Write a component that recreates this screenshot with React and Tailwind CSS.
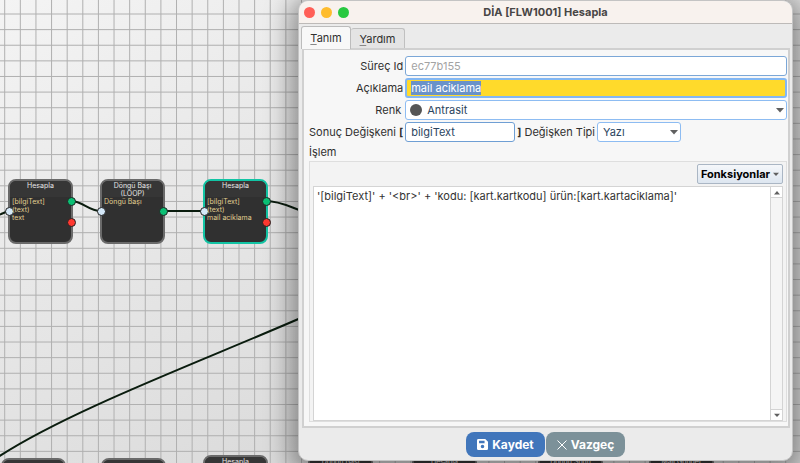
import { useState } from "react";

const GRID = 15.62;
const GRID_LINES = Array.from({ length: 160 }, (_, i) => i);

const nodes = [
  { id: "n1", title: "Hesapla", lines: ["[bilgiText]", "(text)", "text"], place: "left-[8px] top-[179px]", outs: 2, input: true },
  { id: "n2", title: "Döngü Başı (LOOP)", lines: ["Döngü Başı"], place: "left-[100px] top-[179px]", outs: 0, input: true, loop: true },
  { id: "n3", title: "Hesapla", lines: ["[bilgiText]", "(text)", "mail aciklama"], place: "left-[203px] top-[179px]", outs: 2, input: true, selected: true },
  { id: "n4", title: "", lines: [], place: "left-[1px] top-[458px]" },
  { id: "n5", title: "", lines: [], place: "left-[101px] top-[458px]" },
  { id: "n6", title: "Hesapla", lines: [], place: "left-[203px] top-[455px]" },
  { id: "n7", title: "Döngü Başı", lines: [], place: "left-[308px] top-[455px]" },
  { id: "n8", title: "Hesapla", lines: [], place: "left-[412px] top-[455px]" },
  { id: "n9", title: "Döngü Sonu", lines: [], place: "left-[538px] top-[455px]" },
  { id: "n10", title: "Mail Gönder", lines: [], place: "left-[649px] top-[455px]" },
];

const wires = [
  "M-4 216C2 214 5 212 9 211",
  "M71 201C83 201 88 211 101 211",
  "M164 211H204",
  "M266 201C280 201 290 207 302 211",
  "M-2 457C70 410 200 362 310 314",
];

function Port({ className }) {
  return (
    <span
      className={`absolute h-[9px] w-[9px] rounded-full border border-[#222] ${className}`}
    />
  );
}

function FlowNode({ node }) {
  return (
    <div
      className={`absolute h-[65px] w-[65px] rounded-lg border-2 bg-[#303030] ${node.place} ${
        node.selected ? "border-[#12c4a4]" : "border-[#6a6a6a]"
      }`}
    >
      <div className="h-4 rounded-t-md bg-[#363636] px-1 pt-px text-center text-[7px] leading-[8px] text-[#e6e6e6]">
        {node.title}
      </div>
      <div className="relative z-10 px-[2px] pt-px text-[7px] leading-[8px] whitespace-nowrap text-[#e0cf90]">
        {node.lines.map((line) => (
          <div key={line}>{line}</div>
        ))}
      </div>
      {node.input && <Port className="-left-[5px] top-[26px] bg-[#d4e8f8]" />}
      {node.loop && <Port className="-right-[5px] top-[26px] bg-[#0bbf74]" />}
      {node.outs === 2 && (
        <>
          <Port className="-right-[5px] top-[16px] bg-[#0bbf74]" />
          <Port className="-right-[5px] top-[37px] bg-[#ff3830]" />
        </>
      )}
    </div>
  );
}

function FlowCanvas() {
  return (
    <div className="absolute inset-0 overflow-hidden bg-linear-to-br from-[#f4f4f4] to-[#dadada] to-70%">
      <svg className="absolute inset-0 h-full w-full" aria-hidden="true">
        {GRID_LINES.map((i) => (
          <g key={i} stroke="#b0b0b0">
            <line x1={4.7 + i * GRID} x2={4.7 + i * GRID} y1="0" y2="100%" />
            <line x1="0" x2="100%" y1={14 + i * GRID} y2={14 + i * GRID} />
          </g>
        ))}
        {wires.map((d) => (
          <path key={d} d={d} fill="none" stroke="#0a1c0e" strokeWidth="2" />
        ))}
      </svg>
      {nodes.map((node) => (
        <FlowNode key={node.id} node={node} />
      ))}
    </div>
  );
}

function Caret({ up, className = "w-2" }) {
  return (
    <svg viewBox="0 0 8 5" className={`pointer-events-none h-[5px] ${className}`} aria-hidden="true">
      <path d={up ? "M0 5L4 0.5L8 5Z" : "M0 0H8L4 4.5Z"} fill="#606060" />
    </svg>
  );
}

function ComputeDialog() {
  const [tab, setTab] = useState("tanim");
  const [description, setDescription] = useState("mail aciklama");
  const [color, setColor] = useState("Antrasit");
  const [variable, setVariable] = useState("bilgiText");
  const [type, setType] = useState("Yazı");
  const [code, setCode] = useState(
    "'[bilgiText]' + '<br>' + 'kodu: [kart.kartkodu] ürün:[kart.kartaciklama]'"
  );

  return (
    <section
      role="dialog"
      aria-labelledby="dialog-title"
      className="absolute top-0 right-[7px] bottom-[2px] left-[298px] flex flex-col rounded-[10px] border border-[#c4c4c4] bg-[#ebebeb] shadow-[0_6px_26px_8px_rgba(0,0,0,0.4)]"
    >
      <header className="relative flex h-[23px] shrink-0 items-center justify-center rounded-t-[10px] border-b border-[#bdbab8] bg-[#f8f2ee]">
        <div className="absolute left-[5px] flex gap-[6px]">
          <button type="button" aria-label="Kapat" className="h-[11px] w-[11px] rounded-full bg-[#ff5f57]" />
          <button type="button" aria-label="Küçült" className="h-[11px] w-[11px] rounded-full bg-[#febc2e]" />
          <button type="button" aria-label="Büyüt" className="h-[11px] w-[11px] rounded-full bg-[#28c840]" />
        </div>
        <h1 id="dialog-title" className="text-[11px] font-bold text-[#484645]">
          DİA [FLW1001] Hesapla
        </h1>
      </header>

      <div role="tablist" className="flex h-6 shrink-0 items-end px-[2px]">
        <button
          type="button"
          role="tab"
          aria-selected={tab === "tanim"}
          onClick={() => setTab("tanim")}
          className="relative z-10 -mb-px h-[23px] w-[50px] rounded-t-[3px] border border-b-0 border-[#bcbcbc] bg-[#f8f8f8]"
        >
          <span className="underline decoration-[#888] underline-offset-2">T</span>anım
        </button>
        <button
          type="button"
          role="tab"
          aria-selected={tab === "yardim"}
          onClick={() => setTab("yardim")}
          className="h-5 w-[54px] rounded-t-[3px] border border-b-0 border-l-0 border-[#c0c0c0] bg-[#e4e4e4]"
        >
          <span className="underline decoration-[#888] underline-offset-2">Y</span>ardım
        </button>
      </div>

      <div className="mr-[2px] ml-[3px] flex min-h-0 flex-1 flex-col border-2 border-[#d0d0d0] bg-[#f7f7f7] pt-[6px] pr-px pb-1 pl-[5px]">
        <div className="grid grid-cols-[auto_1fr] items-center gap-[2px]">
          <label htmlFor="process-id" className="text-right">Süreç Id</label>
          <input
            id="process-id"
            readOnly
            value="ec77b155"
            className="h-5 w-full rounded-[3px] border border-[#7ba7d7] bg-white px-[5px] text-[#a3a3a3] outline-none"
          />
          <label htmlFor="description" className="text-right">Açıklama</label>
          <div className="relative flex h-5 items-center rounded-[3px] border-2 border-[#83b7f3] bg-[#ffda2b] px-1">
            <span className="pointer-events-none absolute bg-[#6a92c9] text-transparent" aria-hidden="true">
              {description}
            </span>
            <input
              id="description"
              value={description}
              onChange={(e) => setDescription(e.target.value)}
              className="relative w-full bg-transparent text-white outline-none"
            />
          </div>
          <label htmlFor="color" className="pr-[2px] text-right">Renk</label>
          <div className="relative flex items-center">
            <span className="pointer-events-none absolute left-[5px] h-3 w-3 rounded-full bg-[#555]" />
            <select
              id="color"
              value={color}
              onChange={(e) => setColor(e.target.value)}
              className="h-5 w-full appearance-none rounded-[3px] border border-[#8dbcf2] bg-white pl-[21px] text-[#2b4560] outline-none"
            >
              <option>Antrasit</option>
            </select>
            <Caret className="absolute right-[3px] w-2" />
          </div>
          <label htmlFor="variable">
            Sonuç Değişkeni <b>[</b>
          </label>
          <div className="flex items-center gap-[2px]">
            <input
              id="variable"
              value={variable}
              onChange={(e) => setVariable(e.target.value)}
              className="h-5 w-[110px] rounded-[3px] border border-[#6f9fd4] bg-white px-[5px] text-[#2b4560] outline-none"
            />
            <label htmlFor="type">
              <b>]</b> Değişken Tipi
            </label>
            <div className="relative flex items-center">
              <select
                id="type"
                value={type}
                onChange={(e) => setType(e.target.value)}
                className="h-5 w-[84px] appearance-none rounded-[3px] border border-[#8dbcf2] bg-white px-[5px] text-[#2b4560] outline-none"
              >
                <option>Yazı</option>
              </select>
              <Caret className="absolute right-[3px] w-2" />
            </div>
          </div>
        </div>

        <label htmlFor="code" className="mt-[2px] leading-4">İşlem</label>
        <div className="mt-px flex min-h-0 flex-1 flex-col border border-[#dedede] bg-[#f3f3f3] px-[3px] pt-[2px]">
          <button
            type="button"
            className="mb-[2px] flex h-5 items-center gap-[3px] self-end rounded-[2px] border border-[#aab6c4] bg-linear-to-b from-[#f5f7fa] to-[#dde6f0] px-[3px] font-bold text-black"
          >
            Fonksiyonlar
            <Caret className="w-[6px]" />
          </button>
          <div className="flex min-h-0 flex-1 border border-[#d4d4d4] bg-white">
            <textarea
              id="code"
              value={code}
              onChange={(e) => setCode(e.target.value)}
              spellCheck={false}
              className="min-w-0 flex-1 resize-none px-[3px] pt-[2px] text-[#333] outline-none"
            />
            <div className="flex w-3 flex-col justify-between border-l border-[#d4d4d4] bg-[#f5f5f5]">
              <button type="button" aria-label="Yukarı kaydır" className="flex h-[11px] items-center justify-center border-b border-[#d4d4d4] bg-white">
                <Caret up className="w-[6px]" />
              </button>
              <button type="button" aria-label="Aşağı kaydır" className="flex h-[11px] items-center justify-center border-t border-[#d4d4d4] bg-white">
                <Caret className="w-[6px]" />
              </button>
            </div>
          </div>
        </div>
      </div>

      <footer className="flex h-8 shrink-0 items-center justify-center gap-px pt-px text-[12px] font-bold text-white">
        <button type="button" className="flex h-[25px] w-[79px] items-center justify-center gap-1 rounded-lg bg-[#4176bb]">
          <svg viewBox="0 0 16 16" className="h-[11px] w-[11px]" aria-hidden="true">
            <path
              fillRule="evenodd"
              fill="currentColor"
              d="M2 0H12L16 4V14Q16 16 14 16H2Q0 16 0 14V2Q0 0 2 0ZM3 2.5V6H11V2.5ZM8 8.2A2.6 2.6 0 1 0 8 13.4A2.6 2.6 0 1 0 8 8.2Z"
            />
          </svg>
          Kaydet
        </button>
        <button type="button" className="flex h-[25px] w-[79px] items-center justify-center gap-1 rounded-lg bg-[#7c9199]">
          <svg viewBox="0 0 10 10" className="h-[10px] w-[10px]" aria-hidden="true">
            <path d="M.5 .5L9.5 9.5M9.5 .5L.5 9.5" stroke="currentColor" fill="none" />
          </svg>
          Vazgeç
        </button>
      </footer>
    </section>
  );
}

export default function App() {
  return (
    <main className="relative h-screen overflow-hidden font-[Inter,'Liberation_Sans',sans-serif] text-[11px] leading-[14px] text-[#303030]">
      <FlowCanvas />
      <ComputeDialog />
    </main>
  );
}
